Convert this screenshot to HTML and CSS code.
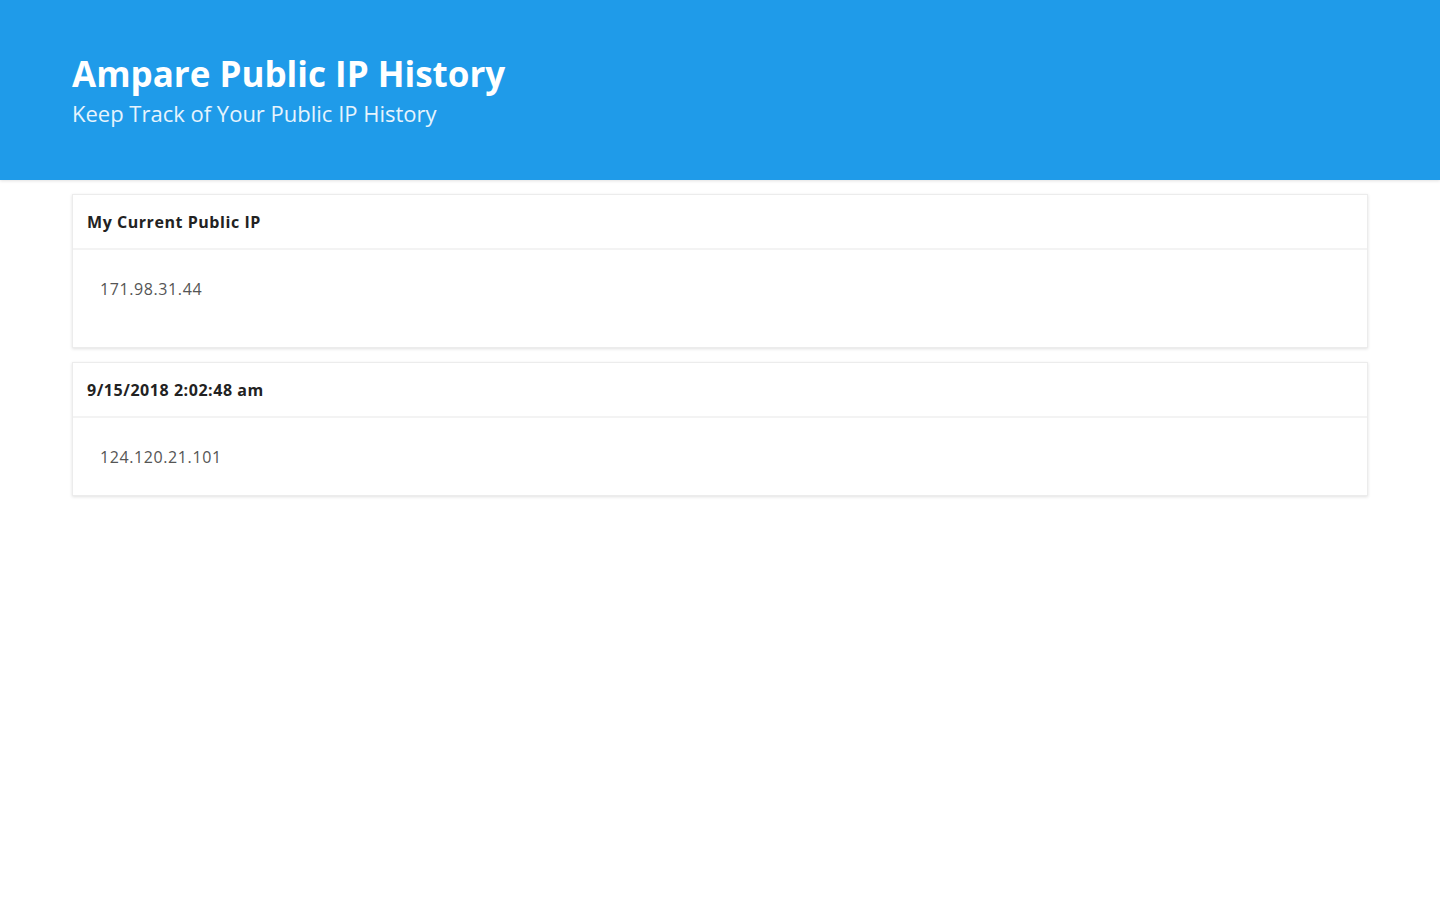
FILE: index.html
```html
<!DOCTYPE html>
<html>
<head>
<meta charset="utf-8">
<title>Ampare Public IP History</title>
<link rel="stylesheet" href="styles.css">
</head>
<body>
<header class="hero">
  <h1 class="hero-title">Ampare Public IP History</h1>
  <p class="hero-sub">Keep Track of Your Public IP History</p>
</header>
<main class="list">
  <section class="card card-current">
    <div class="card-head">My Current Public IP</div>
    <div class="card-body">171.98.31.44</div>
  </section>
  <section class="card card-history">
    <div class="card-head">9/15/2018 2:02:48 am</div>
    <div class="card-body">124.120.21.101</div>
  </section>
</main>
</body>
</html>
```

FILE: styles.css
```css
html, body {
  margin: 0;
  padding: 0;
  background: #ffffff;
  font-family: "Open Sans", "Noto Sans", "DejaVu Sans", sans-serif;
}

.hero {
  background: #1f9be9;
  height: 180px;
  box-sizing: border-box;
  padding: 51px 72px 0;
  color: #ffffff;
  box-shadow: 0 1px 3px rgba(0, 0, 0, 0.12);
}

.hero-title {
  margin: 0;
  font-size: 35px;
  line-height: 46px;
  font-weight: 700;
  letter-spacing: 0;
}

.hero-sub {
  margin: 2px 0 0;
  font-size: 22px;
  line-height: 28px;
  font-weight: 400;
  color: #e6f4fd;
}

.list {
  display: flex;
  flex-direction: column;
  gap: 14px;
  padding: 14px 72px;
}

.card {
  background: #ffffff;
  border: 1px solid #ececec;
  box-shadow: 0 1px 3px rgba(0, 0, 0, 0.12);
}

.card-head {
  height: 55px;
  box-sizing: border-box;
  padding: 0 14px;
  display: flex;
  align-items: center;
  font-size: 16px;
  font-weight: 700;
  letter-spacing: 0.55px;
  color: #222222;
  border-bottom: 2px solid #f3f3f3;
}

.card-body {
  padding: 28px 27px 0;
  font-size: 16px;
  line-height: 22px;
  letter-spacing: 0.6px;
  color: #555555;
}

.card-current .card-body {
  height: 97px;
  box-sizing: border-box;
}

.card-history .card-body {
  height: 77px;
  box-sizing: border-box;
}
```
